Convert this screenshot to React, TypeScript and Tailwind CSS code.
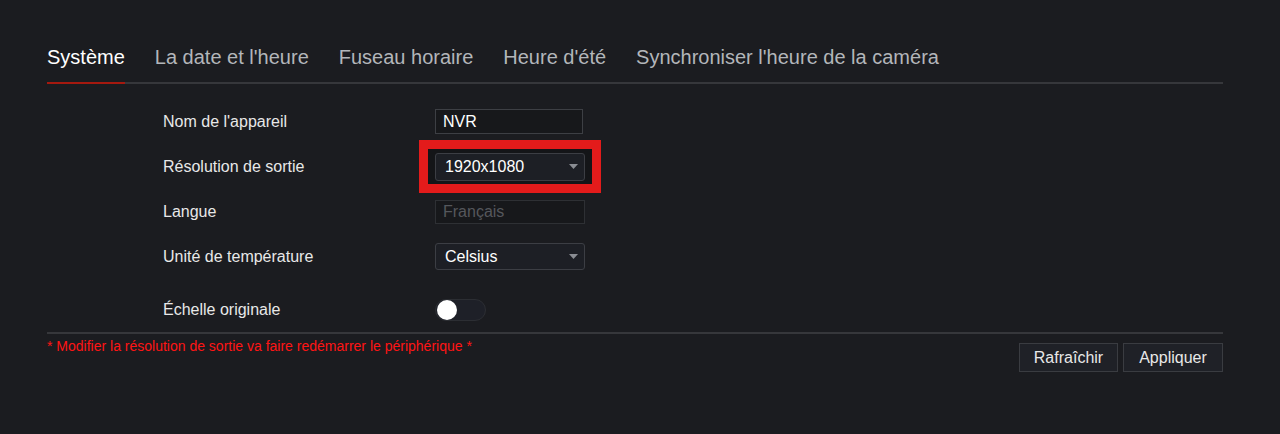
import React from "react";

const tabs = [
  "Système",
  "La date et l'heure",
  "Fuseau horaire",
  "Heure d'été",
  "Synchroniser l'heure de la caméra",
];

function Caret() {
  return (
    <svg width="9" height="5" viewBox="0 0 9 5" className="text-[#8a8d93]">
      <path d="M0 0h9L4.5 5z" fill="currentColor" />
    </svg>
  );
}

function Select({ value, className = "" }: { value: string; className?: string }) {
  return (
    <div
      className={`flex w-[150px] items-center justify-between rounded-[3px] border border-[#3c3e44] bg-[#1d1f25] pl-[9px] pr-[6px] text-[16px] text-white ${className}`}
    >
      <span>{value}</span>
      <Caret />
    </div>
  );
}

function Row({ label, children, className = "" }: { label: string; children: React.ReactNode; className?: string }) {
  return (
    <div className={`flex h-[45px] items-center ${className}`}>
      <div className="w-[388px] shrink-0 pl-[116px] text-[16px] text-[#e8e8e8]">{label}</div>
      <div className="relative">{children}</div>
    </div>
  );
}

export default function App() {
  return (
    <div
      className="h-[434px] w-[1280px] bg-[#1b1c20] pl-[47px] pr-[57px] pt-[45px]"
      style={{ fontFamily: '"Liberation Sans", Arial, sans-serif' }}
    >
      <div className="flex gap-[30px] border-b-2 border-[#36373b]">
        {tabs.map((t, i) => (
          <div
            key={t}
            className={`-mb-[2px] border-b-2 pb-[13px] text-[20px] leading-[24px] ${
              i === 0 ? "border-[#a5190f] text-white" : "border-transparent text-[#b3b6ba]"
            }`}
          >
            {t}
          </div>
        ))}
      </div>

      <div className="mt-[15px] border-b-2 border-[#36373b]">
        <Row label="Nom de l'appareil">
          <div className="flex h-[25px] w-[148px] items-center border border-[#3d3f44] bg-[#17181b] pl-[7px] text-[16px] text-white">
            NVR
          </div>
        </Row>
        <Row label="Résolution de sortie">
          <div className="pointer-events-none absolute -left-[16px] -top-[13px] h-[53px] w-[182px] border-[9px] border-[#e31b1b] bg-[#141518]" />
          <Select value="1920x1080" className="relative h-[28px]" />
        </Row>
        <Row label="Langue">
          <div className="flex h-[24px] w-[150px] items-center border border-[#2e3034] bg-[#17181b] pl-[7px] text-[16px] text-[#55575c]">
            Français
          </div>
        </Row>
        <Row label="Unité de température">
          <Select value="Celsius" className="h-[27px]" />
        </Row>
        <Row label="Échelle originale" className="mt-[8px]">
          <div className="flex h-[22px] w-[51px] items-center rounded-full border border-[#2c2e33] bg-[#1e2028] pl-[1px]">
            <div className="h-[20px] w-[20px] rounded-full bg-white" />
          </div>
        </Row>
      </div>

      <div className="flex items-start justify-between pt-[2px]">
        <div className="text-[14px] leading-[20px] text-[#ff1414]">
          * Modifier la résolution de sortie va faire redémarrer le périphérique *
        </div>
        <div className="mt-[7px] flex gap-[5px]">
          <button className="h-[29px] w-[99px] border border-[#3a3c41] bg-[#1f2127] text-[16px] text-[#e8e8e8]">
            Rafraîchir
          </button>
          <button className="h-[29px] w-[100px] border border-[#3a3c41] bg-[#1f2127] text-[16px] text-[#e8e8e8]">
            Appliquer
          </button>
        </div>
      </div>
    </div>
  );
}
